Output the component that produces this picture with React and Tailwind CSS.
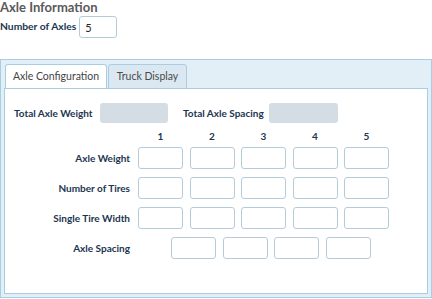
import React, { useState } from "react";

const cols = [1, 2, 3, 4, 5];
const rows = ["Axle Weight", "Number of Tires", "Single Tire Width"];

function Box() {
  return (
    <input
      className="w-[45px] h-[22px] rounded-[3px] border border-[#b4ccd9] bg-white outline-none"
      type="text"
    />
  );
}

export default function App() {
  const [axles, setAxles] = useState("5");
  const [tab, setTab] = useState("config");

  return (
    <div className="w-[432px] h-[299px] overflow-hidden bg-white font-['Lato',sans-serif] text-[10px] whitespace-nowrap">
      <h2 className="h-[14px] text-[13px] font-bold leading-[15px] -mt-[1px] pt-[1px] text-[#595959]">
        Axle Information
      </h2>

      <div className="flex items-center mt-[3px] h-[22px]">
        <label className="font-bold text-[#1c3550] mr-[3px] text-[10.3px]">Number of Axles</label>
        <input
          value={axles}
          onChange={(e) => setAxles(e.target.value)}
          className="w-[38px] h-[22px] rounded-[3px] border border-[#b4ccd9] px-[5px] text-[11px] text-[#222] outline-none"
        />
      </div>

      {/* Tabs */}
      <div className="mt-[21px] h-[239px] border border-[#a9cde3] bg-[#e3eff7] px-[3px] pt-[4px] pb-[3px] flex flex-col">
        <div className="flex gap-[1px] pl-[1px]">
          <button
            onClick={() => setTab("config")}
            className={`h-[25px] w-[102px] rounded-t-[3px] border border-[#a9cde3] text-[10.5px] -mb-[1px] ${
              tab === "config" ? "bg-white border-b-white text-[#444]" : "bg-[#dbe8f1] text-[#4a4a4a]"
            }`}
          >
            Axle Configuration
          </button>
          <button
            onClick={() => setTab("truck")}
            className={`h-[25px] w-[79px] rounded-t-[3px] border border-[#a9cde3] text-[10.5px] -mb-[1px] ${
              tab === "truck" ? "bg-white border-b-white text-[#444]" : "bg-[#dbe8f1] text-[#4a4a4a]"
            }`}
          >
            Truck Display
          </button>
        </div>

        <div className="flex-1 border border-[#a9cde3] bg-white">
          <div className="flex items-center mt-[14px] ml-[9px] h-[20px]">
            <span className="font-bold text-[#1c3550] w-[86px]">Total Axle Weight</span>
            <div className="w-[68px] h-[20px] rounded-[3px] bg-[#d3dde3]" />
            <span className="font-bold text-[#1c3550] ml-[15px] w-[86px]">Total Axle Spacing</span>
            <div className="w-[69px] h-[20px] rounded-[3px] bg-[#d3dde3]" />
          </div>

          <div className="flex ml-[133px] mt-[6px] gap-[6.5px] h-[14px] items-center">
            {cols.map((c) => (
              <span key={c} className="w-[45px] text-center font-bold text-[#1c3550]">
                {c}
              </span>
            ))}
          </div>

          {rows.map((r, i) => (
            <div key={r} className={`flex items-center h-[22px] ${i === 0 ? "mt-[4px]" : "mt-[8px]"}`}>
              <span className="w-[133px] text-right font-bold text-[#1c3550] pr-[8px]">{r}</span>
              <div className="flex gap-[6.5px]">
                {cols.map((c) => (
                  <Box key={c} />
                ))}
              </div>
            </div>
          ))}

          <div className="flex items-center mt-[8px] h-[22px]">
            <span className="w-[133px] text-right font-bold text-[#1c3550] pr-[8px]">Axle Spacing</span>
            <div className="flex gap-[6.5px] ml-[33px]">
              {cols.slice(0, 4).map((c) => (
                <Box key={c} />
              ))}
            </div>
          </div>
        </div>
      </div>
    </div>
  );
}
